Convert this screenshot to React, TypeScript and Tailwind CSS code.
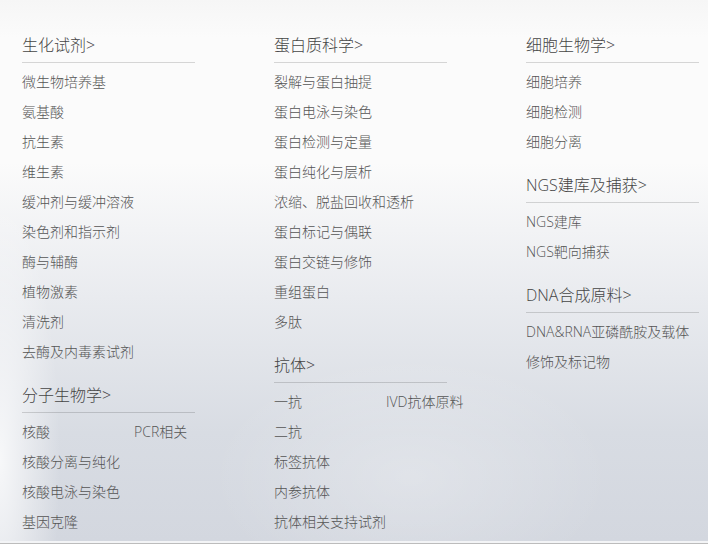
import React from "react";

type Section = { title: string; items: (string | [string, string])[] };

const columns: Section[][] = [
  [
    {
      title: "生化试剂",
      items: [
        "微生物培养基",
        "氨基酸",
        "抗生素",
        "维生素",
        "缓冲剂与缓冲溶液",
        "染色剂和指示剂",
        "酶与辅酶",
        "植物激素",
        "清洗剂",
        "去酶及内毒素试剂",
      ],
    },
    {
      title: "分子生物学",
      items: [["核酸", "PCR相关"], "核酸分离与纯化", "核酸电泳与染色", "基因克隆"],
    },
  ],
  [
    {
      title: "蛋白质科学",
      items: [
        "裂解与蛋白抽提",
        "蛋白电泳与染色",
        "蛋白检测与定量",
        "蛋白纯化与层析",
        "浓缩、脱盐回收和透析",
        "蛋白标记与偶联",
        "蛋白交链与修饰",
        "重组蛋白",
        "多肽",
      ],
    },
    {
      title: "抗体",
      items: [["一抗", "IVD抗体原料"], "二抗", "标签抗体", "内参抗体", "抗体相关支持试剂"],
    },
  ],
  [
    { title: "细胞生物学", items: ["细胞培养", "细胞检测", "细胞分离"] },
    { title: "NGS建库及捕获", items: ["NGS建库", "NGS靶向捕获"] },
    { title: "DNA合成原料", items: ["DNA&RNA亚磷酰胺及载体", "修饰及标记物"] },
  ],
];

function SectionBlock({ s }: { s: Section }) {
  return (
    <div className="mb-[16px]">
      <div className="h-[30px] text-[16px] leading-6 text-[#454545] border-b border-black/15 whitespace-nowrap">
        {s.title}&gt;
      </div>
      <ul className="mt-[4px]">
        {s.items.map((it, i) =>
          Array.isArray(it) ? (
            <li key={i} className="flex h-[30px] leading-[30px] text-[14px] text-[#555] whitespace-nowrap">
              <span className="w-[112px] shrink-0">{it[0]}</span>
              <span>{it[1]}</span>
            </li>
          ) : (
            <li key={i} className="h-[30px] leading-[30px] text-[14px] text-[#555] whitespace-nowrap">
              {it}
            </li>
          )
        )}
      </ul>
    </div>
  );
}

export default function App() {
  return (
    <div
      className="w-[708px] h-[544px] flex flex-col overflow-hidden font-light"
      style={{ fontFamily: '"Open Sans", "Noto Sans CJK SC", sans-serif' }}
    >
      <div className="relative h-[541px] bg-[linear-gradient(180deg,#f6f6f6_0%,#fbfbfb_7%,#fbfbfb_30%,#e9ebef_55%,#d8dce3_80%,#d3d7df_100%)]">
        <div className="absolute inset-0 bg-[radial-gradient(ellipse_60px_260px_at_0%_85%,rgba(255,255,255,0.8),rgba(255,255,255,0))]" />
        <div className="absolute inset-0 bg-[radial-gradient(ellipse_200px_120px_at_58%_88%,rgba(255,255,255,0.25),rgba(255,255,255,0))]" />
        <div className="relative flex gap-[79px] pl-[22px] pt-[33px]">
          {columns.map((col, ci) => (
            <div key={ci} className="w-[173px]">
              {col.map((s, si) => (
                <SectionBlock key={si} s={s} />
              ))}
            </div>
          ))}
        </div>
      </div>
      <div className="h-[2px] bg-[#f3f4f6]" />
      <div className="h-[1px] bg-[#bcbcbc]" />
    </div>
  );
}
